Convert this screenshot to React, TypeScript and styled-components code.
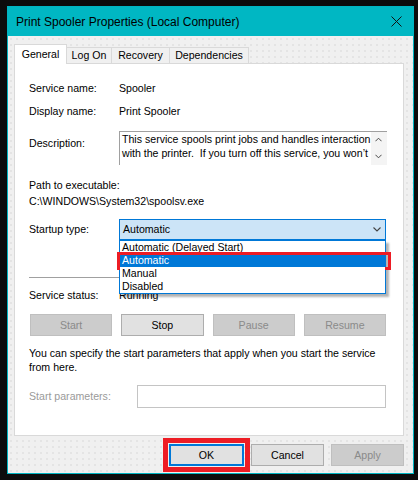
import styled, { createGlobalStyle } from 'styled-components';

const GlobalStyle = createGlobalStyle`
  html, body {
    margin: 0;
    padding: 0;
    background: #0c0c0c;
  }
  body {
    font-family: 'Liberation Sans', Arial, sans-serif;
    font-size: 10.6px;
    color: #000;
  }
  * {
    box-sizing: border-box;
  }
`;

const Screen = styled.div`
  width: 418px;
  height: 480px;
  padding: 6px 0 0 7px;
  background: #0c0c0c;
`;

const Window = styled.div`
  width: 407px;
  height: 468px;
  border: 1px solid #00b4c1;
  display: flex;
  flex-direction: column;
  background: #f0f0f0;
`;

const TitleBar = styled.div`
  flex: none;
  height: 29px;
  background: #00b7c3;
  display: flex;
  align-items: center;
  justify-content: space-between;
  padding: 0 11px 0 8px;
`;

const Title = styled.span`
  font-size: 12px;
  color: #000;
`;

const Body = styled.div`
  flex: 1;
  display: flex;
  flex-direction: column;
  padding: 8px 9px 7px 6px;
  background-color: #f0f0f0;
  background-image: radial-gradient(circle, #dddddd 0.6px, transparent 0.9px);
  background-size: 6px 6px;
`;

const TabRow = styled.div`
  display: flex;
  align-items: flex-end;
  height: 20px;
  position: relative;
  z-index: 1;
`;

const Tab = styled.div<{ $w: number; $active?: boolean }>`
  width: ${(p) => p.$w}px;
  height: ${(p) => (p.$active ? 20 : 16)}px;
  margin-bottom: ${(p) => (p.$active ? 0 : 1)}px;
  margin-left: -1px;
  border: 1px solid #d9d9d9;
  border-bottom: none;
  background: ${(p) => (p.$active ? '#fff' : '#f0f0f0')};
  display: flex;
  align-items: center;
  justify-content: center;
  line-height: 13px;

  &:first-child {
    margin-left: 0;
  }
`;

const Panel = styled.div`
  flex: 1;
  margin-top: -1px;
  background: #fff;
  border: 1px solid #d9d9d9;
  padding: 18px 17px 0 14px;
  display: flex;
  flex-direction: column;
`;

const InfoRow = styled.div<{ $mt: number; $cols?: string; $top?: boolean }>`
  display: grid;
  grid-template-columns: ${(p) => p.$cols || '90px 1fr'};
  align-items: ${(p) => (p.$top ? 'start' : 'center')};
  line-height: 13px;
  margin-top: ${(p) => p.$mt}px;
`;

const Label = styled.span<{ $pt?: number; $disabled?: boolean }>`
  padding-top: ${(p) => p.$pt || 0}px;
  color: ${(p) => (p.$disabled ? '#9a9a9a' : '#000')};
`;

const DescBox = styled.div`
  height: 34px;
  display: flex;
  border-top: 1px solid #a0a0a0;
  border-left: 1px solid #a0a0a0;
  background: #fff;
`;

const DescText = styled.div`
  flex: 1;
  overflow: hidden;
  white-space: pre;
  padding-left: 2px;
  line-height: 14px;
`;

const ScrollCol = styled.div`
  width: 16px;
  background: #f4f4f4;
  display: flex;
  flex-direction: column;
  align-items: center;
  justify-content: space-between;
  padding: 5px 0 6px;
`;

const PathBlock = styled.div`
  margin-top: 12px;
  line-height: 16px;
`;

const Select = styled.div`
  position: relative;
  height: 21px;
  border: 1px solid #0078d7;
  background: #cce4f7;
  display: flex;
  align-items: center;
  justify-content: space-between;
  padding: 0 4px 0 3px;
`;

const DropList = styled.div`
  position: absolute;
  z-index: 5;
  top: calc(100% + 1px);
  left: -1px;
  right: -1px;
  background: #fff;
  border: 1px solid #0078d7;
  box-shadow: 3px 3px 2px rgba(0, 0, 0, 0.3);
`;

const DropItem = styled.div<{ $selected?: boolean }>`
  position: relative;
  height: 13px;
  line-height: 13px;
  padding-left: 2px;
  background: ${(p) => (p.$selected ? '#0078d7' : '#fff')};
  color: ${(p) => (p.$selected ? '#fff' : '#000')};
`;

const RedMark = styled.div`
  position: absolute;
  inset: -2px -6px -3px -3px;
  border: 3px solid #ed1c24;
`;

const Separator = styled.div`
  margin-top: 37px;
  height: 1px;
  background: #a0a0a0;
`;

const ActionRow = styled.div`
  margin-top: 12px;
  margin-left: 1px;
  display: grid;
  grid-template-columns: repeat(4, 1fr);
  column-gap: 9px;
`;

const Button = styled.div<{ $disabled?: boolean; $default?: boolean; $marked?: boolean; $w?: number }>`
  height: 22px;
  width: ${(p) => (p.$w ? `${p.$w}px` : 'auto')};
  display: flex;
  align-items: center;
  justify-content: center;
  background: ${(p) => (p.$disabled ? '#cccccc' : '#e1e1e1')};
  border: ${(p) => (p.$default ? '2px solid #0078d7' : p.$disabled ? '1px solid #bfbfbf' : '1px solid #adadad')};
  color: ${(p) => (p.$disabled ? '#8a8a8a' : '#000')};
  outline: ${(p) => (p.$marked ? '5px solid #ed1c24' : 'none')};
  outline-offset: 1px;
`;

const Hint = styled.div`
  margin-top: 10px;
  line-height: 14px;
  white-space: nowrap;
`;

const ParamInput = styled.div`
  height: 23px;
  border: 1px solid #c4c4c4;
  background: #fff;
`;

const DialogButtons = styled.div`
  flex: none;
  margin-top: 8px;
  display: flex;
  justify-content: flex-end;
  gap: 7px;
`;

const Chevron = ({ up, w = 8 }: { up?: boolean; w?: number }) => (
  <svg width={w} height={5} viewBox="0 0 8 5">
    <polyline
      points={up ? '0.5,4.5 4,1 7.5,4.5' : '0.5,0.5 4,4 7.5,0.5'}
      fill="none"
      stroke="#444"
      strokeWidth="1.1"
    />
  </svg>
);

const CloseIcon = () => (
  <svg width={11} height={11} viewBox="0 0 11 11">
    <path d="M0.5 0.5 L10.5 10.5 M10.5 0.5 L0.5 10.5" stroke="#111" strokeWidth="1" />
  </svg>
);

const tabs = [
  { name: 'General', w: 53 },
  { name: 'Log On', w: 46 },
  { name: 'Recovery', w: 59 },
  { name: 'Dependencies', w: 80 },
];

const startupOptions = ['Automatic (Delayed Start)', 'Automatic', 'Manual', 'Disabled'];

const App = () => {
  return (
    <Screen>
      <GlobalStyle />
      <Window>
        <TitleBar>
          <Title>Print Spooler Properties (Local Computer)</Title>
          <CloseIcon />
        </TitleBar>
        <Body>
          <TabRow>
            {tabs.map((tab, index) => (
              <Tab key={tab.name} $w={tab.w} $active={index === 0}>
                {tab.name}
              </Tab>
            ))}
          </TabRow>
          <Panel>
            <InfoRow $mt={0}>
              <Label>Service name:</Label>
              <span>Spooler</span>
            </InfoRow>
            <InfoRow $mt={10}>
              <Label>Display name:</Label>
              <span>Print Spooler</span>
            </InfoRow>
            <InfoRow $mt={13} $top>
              <Label $pt={6}>Description:</Label>
              <DescBox>
                <DescText>
                  {'This service spools print jobs and handles interaction\nwith the printer.  If you turn off this service, you won\u2019t'}
                </DescText>
                <ScrollCol>
                  <Chevron up w={7} />
                  <Chevron w={7} />
                </ScrollCol>
              </DescBox>
            </InfoRow>
            <PathBlock>
              <div>Path to executable:</div>
              <div>C:\WINDOWS\System32\spoolsv.exe</div>
            </PathBlock>
            <InfoRow $mt={10}>
              <Label>Startup type:</Label>
              <Select>
                <span>Automatic</span>
                <Chevron />
                <DropList>
                  {startupOptions.map((option) => (
                    <DropItem key={option} $selected={option === 'Automatic'}>
                      {option}
                      {option === 'Automatic' && <RedMark />}
                    </DropItem>
                  ))}
                </DropList>
              </Select>
            </InfoRow>
            <Separator />
            <InfoRow $mt={11}>
              <Label>Service status:</Label>
              <span>Running</span>
            </InfoRow>
            <ActionRow>
              <Button $disabled>Start</Button>
              <Button>Stop</Button>
              <Button $disabled>Pause</Button>
              <Button $disabled>Resume</Button>
            </ActionRow>
            <Hint>
              You can specify the start parameters that apply when you start the service
              <br />
              from here.
            </Hint>
            <InfoRow $mt={11} $cols="108px 1fr">
              <Label $disabled>Start parameters:</Label>
              <ParamInput />
            </InfoRow>
          </Panel>
          <DialogButtons>
            <Button $default $marked $w={75}>
              OK
            </Button>
            <Button $w={73}>Cancel</Button>
            <Button $disabled $w={73}>
              Apply
            </Button>
          </DialogButtons>
        </Body>
      </Window>
    </Screen>
  );
};

export default App;
